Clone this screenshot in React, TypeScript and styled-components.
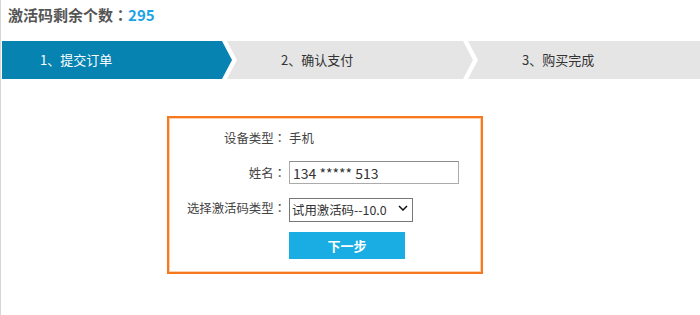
import styled, {createGlobalStyle} from "styled-components";

const GlobalStyle = createGlobalStyle`
  html, body {
    margin: 0;
    padding: 0;
    background: #fff;
  }
  body {
    font-family: "Microsoft YaHei", "Noto Sans CJK SC", sans-serif;
    color: #333;
  }
`;

interface IStep {
  label: string;
}

const steps: IStep[] = [
  {label: '1、提交订单'},
  {label: '2、确认支付'},
  {label: '3、购买完成'},
];

// centred full-width colon, like the YaHei one
const Colon = styled.span`
  font-family: "Noto Sans CJK TC", sans-serif;
`;

const App = () => {
  return (
    <>
      <GlobalStyle/>
      <PageWrap>
        <Title>
          激活码剩余个数<Colon>：</Colon><Count>295</Count>
        </Title>
        <StepBar>
          {steps.map((s, i) => (
            <Step key={s.label} $index={i} $active={i === 0} $last={i === steps.length - 1}>
              {s.label}
            </Step>
          ))}
        </StepBar>
        <FormBox>
          <FormGrid>
            <Label>设备类型<Colon>：</Colon></Label>
            <PlainValue>手机</PlainValue>

            <Label>姓名<Colon>：</Colon></Label>
            <TextInput defaultValue="134 ***** 513"/>

            <Label>选择激活码类型<Colon>：</Colon></Label>
            <SelectWrap>
              <Select defaultValue="trial">
                <option value="trial">试用激活码--10.0</option>
              </Select>
              <SelectArrow width="10" height="6" viewBox="0 0 10 6">
                <path d="M1 1 L5 5 L9 1" fill="none" stroke="#111" strokeWidth="1.5"/>
              </SelectArrow>
            </SelectWrap>

            <span/>
            <NextButton type="button">下一步</NextButton>
          </FormGrid>
        </FormBox>
      </PageWrap>
    </>
  )
}

export default App;

const PageWrap = styled.div`
  min-height: 315px;
  box-sizing: border-box;
  border-left: 1px solid #d6d6d6;
`;

const Title = styled.div`
  height: 41px;
  box-sizing: border-box;
  padding: 5px 0 0 7px;
  font-size: 15px;
  line-height: 20px;
  font-weight: bold;
  color: #555;
`;

const Count = styled.span`
  color: #1ba3e6;
`;

const StepBar = styled.div`
  display: flex;
  height: 38px;
  padding-left: 1px;
`;

const Step = styled.div<{ $index: number; $active: boolean; $last: boolean }>`
  flex: ${p => p.$last ? '1' : 'none'};
  width: ${p => p.$index === 0 ? '230px' : '246px'};
  margin-left: ${p => p.$index === 0 ? '0' : '-5px'};
  padding-left: ${p => p.$index === 0 ? '38px' : '54px'};
  box-sizing: border-box;
  background: ${p => p.$active ? '#0683b1' : '#e5e5e5'};
  color: ${p => p.$active ? '#fff' : '#333'};
  font-size: 13px;
  line-height: 38px;
  clip-path: ${p => p.$last
    ? 'polygon(0 0, 100% 0, 100% 100%, 0 100%, 10px 50%)'
    : p.$index === 0
      ? 'polygon(0 0, calc(100% - 10px) 0, 100% 50%, calc(100% - 10px) 100%, 0 100%)'
      : 'polygon(0 0, calc(100% - 10px) 0, 100% 50%, calc(100% - 10px) 100%, 0 100%, 10px 50%)'};
`;

const FormBox = styled.div`
  width: 316px;
  height: 158px;
  box-sizing: border-box;
  margin: 37px 0 0 166px;
  border: 2px solid #f7781e;
  box-shadow: inset 0 0 0 1px #fcd0ad;
  padding: 11px 0 0 0;
`;

const FormGrid = styled.div`
  display: grid;
  grid-template-columns: 117px auto;
  column-gap: 3px;
  row-gap: 12px;
  align-items: center;
  justify-items: start;
  & > :nth-child(3), & > :nth-child(4) {
    margin-top: 2px;
  }
`;

const Label = styled.span`
  justify-self: end;
  font-size: 12.4px;
  line-height: 18px;
  color: #444;
  white-space: nowrap;
`;

const PlainValue = styled.span`
  font-size: 12.4px;
  line-height: 18px;
  color: #444;
`;

const TextInput = styled.input`
  width: 170px;
  height: 23px;
  box-sizing: border-box;
  border: 1px solid #ababab;
  border-top-color: #8d8d8d;
  padding: 0 3px;
  font-family: "Microsoft YaHei", "Noto Sans CJK SC", sans-serif;
  font-size: 14px;
  color: #333;
  outline: none;
`;

const SelectWrap = styled.div`
  position: relative;
  width: 124px;
  height: 24px;
`;

const Select = styled.select`
  appearance: none;
  width: 124px;
  height: 24px;
  box-sizing: border-box;
  border: 1px solid #777;
  border-radius: 0;
  background: #fff;
  padding: 0 2px;
  font-family: "Microsoft YaHei", "Noto Sans CJK SC", sans-serif;
  font-size: 12.4px;
  color: #333;
  outline: none;
`;

const SelectArrow = styled.svg`
  position: absolute;
  right: 5px;
  top: 9px;
  pointer-events: none;
`;

const NextButton = styled.button`
  width: 116px;
  height: 27px;
  border: none;
  background: #1aade4;
  color: #fff;
  font-family: "Microsoft YaHei", "Noto Sans CJK SC", sans-serif;
  font-size: 13px;
  font-weight: bold;
  cursor: pointer;
`;
